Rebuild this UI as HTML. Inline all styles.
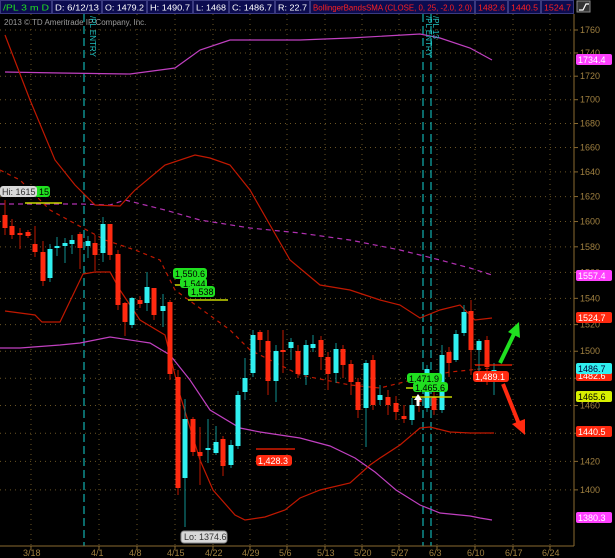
<!DOCTYPE html>
<html><head><meta charset="utf-8"><style>
html,body{margin:0;padding:0;background:#000;width:615px;height:558px;overflow:hidden}
svg{display:block;font-family:"Liberation Sans","DejaVu Sans",sans-serif}
</style></head><body>
<svg id="s" width="615" height="558" xmlns="http://www.w3.org/2000/svg">
<rect width="615" height="558" fill="#000"/>
<g id="grid"></g>
<text x="4" y="25" fill="#9a9a9a" font-size="8">2013 © TD Ameritrade IP Company, Inc.</text>
<g id="vl"></g>
<polyline fill="none" stroke="#c040c0" stroke-width="1.2" points="5,72 60,73 130,74 175,68 200,50 230,40 300,40 350,38 420,34 440,38 470,48 492,60"/>
<polyline fill="none" stroke="#b030b0" stroke-width="1.2" stroke-dasharray="5,4" points="0,204 80,204 110,205 125,200 145,205 165,210 200,220 250,228 300,233 350,240 400,250 440,260 470,268 492,275"/>
<polyline fill="none" stroke="#c040c0" stroke-width="1.2" points="0,348 20,348 60,345 80,343 110,337 150,343 170,355 190,380 210,410 240,428 260,432 300,438 330,446 355,458 375,472 396,490 420,505 440,513 470,516 480,518 492,520"/>
<polyline fill="none" stroke="#c01800" stroke-width="1.2" points="5,35 30,100 55,160 75,185 95,205 120,206 135,190 165,165 195,155 210,158 230,165 250,190 270,225 290,260 320,285 350,290 380,300 400,305 420,318 440,310 460,305 475,320 492,318"/>
<polyline fill="none" stroke="#c01800" stroke-width="1.2" stroke-dasharray="4,4" points="0,170 20,180 50,210 105,240 135,250 160,260 175,290 230,330 250,350 300,375 350,385 380,388 420,378 450,372 480,369 492,368"/>
<polyline fill="none" stroke="#c01800" stroke-width="1.2" points="5,311 35,315 42,322 60,322 83,274 95,272 110,272 120,290 140,320 165,335 180,395 200,460 213,490 235,515 245,520 265,517 285,510 300,498 320,490 350,483 370,465 380,458 400,445 420,428 430,427 450,432 470,433 494,433"/>
<g id="c"></g>
<line x1="25" y1="203" x2="62" y2="203" stroke="#c8d800" stroke-width="1.5"/>
<line x1="175" y1="285" x2="186" y2="285" stroke="#c8d800" stroke-width="1.5"/>
<line x1="188" y1="300" x2="228" y2="300" stroke="#c8d800" stroke-width="1.5"/>
<line x1="256" y1="449" x2="295" y2="449" stroke="#ff2000" stroke-width="1.2"/>
<line x1="412" y1="397" x2="452" y2="397" stroke="#c8d800" stroke-width="1.5"/>
<line x1="406" y1="388" x2="418" y2="388" stroke="#c8d800" stroke-width="1.5"/>
<line x1="475" y1="365" x2="512" y2="365" stroke="#ff2000" stroke-width="1.2"/>
<g font-size="9">
<rect x="34" y="186" width="16" height="11" rx="3" fill="#20e020"/><text x="39" y="195" fill="#000">15</text>
<rect x="0" y="186" width="37" height="11" rx="3" fill="#d8d8d8"/><text x="2" y="195" fill="#333">Hi: 1615</text>
<rect x="173" y="268" width="34" height="11" rx="3" fill="#20e020"/><text x="175" y="277" fill="#000">1,550.6</text>
<rect x="180" y="278" width="27" height="10" rx="3" fill="#20e020"/><text x="183" y="287" fill="#000">1,544</text>
<rect x="188" y="286" width="27" height="11" rx="3" fill="#20e020"/><text x="191" y="295" fill="#000">1,538</text>
<rect x="256" y="455" width="36" height="11" rx="3" fill="#ff2a10"/><text x="258" y="464" fill="#fff">1,428.3</text>
<rect x="407" y="373" width="35" height="10" rx="3" fill="#20e020"/><text x="409" y="382" fill="#000">1,471.9</text>
<rect x="413" y="382" width="35" height="10" rx="3" fill="#20e020"/><text x="415" y="391" fill="#000">1,465.6</text>
<rect x="473" y="371" width="36" height="11" rx="3" fill="#ff2a10"/><text x="475" y="380" fill="#fff">1,489.1</text>
<rect x="181" y="531" width="46" height="12" rx="3" fill="#d8d8d8" stroke="#888"/><text x="184" y="540" fill="#333">Lo: 1374.6</text>
</g>
<polygon points="418,394 422,400 419.5,400 419.5,406 416.5,406 416.5,400 414,400" fill="#fff"/>
<line x1="500" y1="363" x2="514" y2="334" stroke="#20e020" stroke-width="4"/>
<polygon points="519,322 520,338 508,332" fill="#20e020"/>
<line x1="503" y1="384" x2="519" y2="424" stroke="#ff2a10" stroke-width="4"/>
<polygon points="525,435 512,424 525,419" fill="#ff2a10"/>
<line x1="574" y1="14" x2="574" y2="546" stroke="#8a6a30"/>
<line x1="0" y1="546" x2="574" y2="546" stroke="#8a6a30"/>
<g id="ax" font-size="9" fill="#a08040"></g>
<g font-size="9">
<rect x="576" y="54" width="36" height="11" rx="2" fill="#ff40ff"/><text x="578" y="63" fill="#fff">1734.4</text>
<rect x="576" y="270" width="36" height="11" rx="2" fill="#ff40ff"/><text x="578" y="279" fill="#fff">1557.4</text>
<rect x="576" y="312" width="36" height="11" rx="2" fill="#ff2a10"/><text x="578" y="321" fill="#fff">1524.7</text>
<rect x="576" y="370" width="36" height="11" rx="2" fill="#ff2a10"/><text x="578" y="379" fill="#fff">1482.6</text>
<rect x="576" y="363" width="36" height="11" rx="2" fill="#30f0f0"/><text x="578" y="372" fill="#003">1486.7</text>
<rect x="576" y="391" width="36" height="11" rx="2" fill="#d8f000"/><text x="578" y="400" fill="#000">1465.6</text>
<rect x="576" y="426" width="36" height="11" rx="2" fill="#ff2a10"/><text x="578" y="435" fill="#fff">1440.5</text>
<rect x="576" y="512" width="36" height="11" rx="2" fill="#ff40ff"/><text x="578" y="521" fill="#fff">1380.3</text>
</g>
<rect x="0" y="0" width="574" height="14" fill="#0c0c50"/>
<g font-size="8.5" id="tb"></g>
<rect x="577" y="1" width="13" height="11" fill="#333" stroke="#888"/>
<path d="M579,10 L583,10 L586,4 L589,4" stroke="#fff" fill="none" stroke-width="1.2"/>
<text x="90" y="16" fill="#20c0c0" font-size="8" transform="rotate(90 90 16)">/PL ENTRY</text>
<text x="426" y="16" fill="#20c0c0" font-size="8" transform="rotate(90 426 16)">/PL ENTRY</text>
<text x="433" y="16" fill="#20c0c0" font-size="8" transform="rotate(90 433 16)">/PL 13</text>
</svg>
<script>
var NS="http://www.w3.org/2000/svg";
function el(p,t,a,txt){var e=document.createElementNS(NS,t);for(var k in a)e.setAttribute(k,a[k]);if(txt!=null)e.textContent=txt;document.getElementById(p).appendChild(e);return e;}
function y(p){return 30+(Math.log(1760)-Math.log(p))*2009.6;}
var xs=[31,99,137,175,213,250,287,325,362,399,437,475,513,550];
var dl=["3/18","4/1","4/8","4/15","4/22","4/29","5/6","5/13","5/20","5/27","6/3","6/10","6/17","6/24"];
for(var p=1400;p<=1760;p+=20){var yy=y(p);el("grid","line",{x1:0,x2:574,y1:yy,y2:yy,stroke:"#6a5424","stroke-dasharray":"1,4"});
el("ax","line",{x1:574,x2:578,y1:yy,y2:yy,stroke:"#8a6a30"});el("ax","text",{x:580,y:yy+3},String(p));}
xs.forEach(function(x,i){el("grid","line",{x1:x,x2:x,y1:14,y2:546,stroke:"#6a5424","stroke-dasharray":"1,4"});
el("ax","line",{x1:x,x2:x,y1:546,y2:550,stroke:"#8a6a30"});el("ax","text",{x:x-8,y:556},dl[i]);});
[84,423,431].forEach(function(x){el("vl","line",{x1:x,x2:x,y1:14,y2:546,stroke:"#10b0b0","stroke-width":1.2,"stroke-dasharray":"8,4"});});
var C=[[5,215,228,200,235],[12,226,235,219,239],[20,233,235,228,249],[28,232,236,230,238],[35,244,252,226,257],[43,252,281,241,286],[50,278,249,244,282],[57,248,246,237,256],[65,246,243,238,263],[72,244,240,235,254],[80,234,248,232,269],[88,246,241,236,258],[95,243,255,235,271],[103,253,224,217,262],[110,224,255,224,260],[118,254,305,250,310],[125,303,322,302,336],[132,325,298,297,328],[140,300,304,296,308],[147,303,287,272,311],[154,288,315,288,320],[163,311,306,294,327],[170,302,374,300,380],[178,377,488,370,495],[185,478,419,399,527],[193,419,452,417,456],[200,452,456,427,485],[208,450,448,419,463],[216,453,442,426,455],[223,439,466,436,476],[231,465,445,440,468],[238,446,395,391,449],[245,392,378,358,400],[253,373,335,330,377],[260,332,340,330,352],[268,341,381,330,395],[276,381,351,345,402],[283,350,352,330,373],[291,348,342,338,360],[298,351,374,345,378],[306,375,345,340,385],[313,348,344,335,352],[321,340,357,336,370],[328,357,374,352,390],[336,373,349,343,383],[343,349,365,345,378],[351,364,382,360,395],[358,382,410,378,418],[366,408,363,360,447],[373,360,405,355,410],[380,400,395,385,405],[388,397,405,390,415],[396,403,412,396,420],[404,416,419,405,423],[412,420,405,398,425],[419,398,402,395,412],[427,408,369,365,412],[434,397,410,390,415],[442,410,355,345,413],[449,352,363,347,377],[456,360,334,330,362],[464,333,312,305,336],[471,311,350,300,375],[479,350,341,339,378],[487,340,367,336,385],[494,372,370,363,395]];
C.forEach(function(c){var red=c[2]>c[1];var col=red?"#ff2a10":"#30f0f0";var wc=red?"#c01800":"#109090";
el("c","line",{x1:c[0],x2:c[0],y1:c[3],y2:c[4],stroke:wc,"stroke-width":1});
var t=Math.min(c[1],c[2]),h=Math.max(Math.abs(c[2]-c[1]),1.5);el("c","rect",{x:c[0]-2.5,y:t,width:5,height:h,fill:col});});
var tb=[[0,"/PL 3 m D","#20e020",52],[52,"D: 6/12/13","#fff",50],[102,"O: 1479.2","#fff",45],[147,"H: 1490.7","#fff",46],[193,"L: 1468","#fff",36],[229,"C: 1486.7","#fff",46],[275,"R: 22.7","#fff",35],[310,"BollingerBandsSMA (CLOSE, 0, 25, -2.0, 2.0)","#ff2020",165],[475,"1482.6","#ff2020",33],[508,"1440.5","#ff2020",33],[541,"1524.7","#ff2020",33]];
tb.forEach(function(t){el("tb","rect",{x:t[0]+0.5,y:0.5,width:t[3]-1,height:13,fill:"#0c0c50",stroke:"#3a3a80"});el("tb","text",{x:t[0]+3,y:10.5,fill:t[2],textLength:t[3]-6,lengthAdjust:"spacingAndGlyphs"},t[1]);});
</script>
</body></html>
